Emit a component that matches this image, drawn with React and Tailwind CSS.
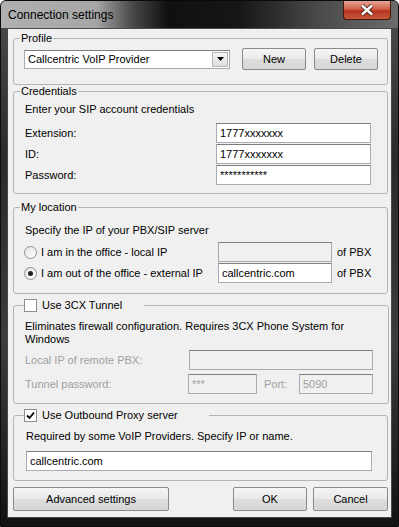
import { useState } from "react";

const font = { fontFamily: '"Liberation Sans", Arial, sans-serif' };

const Input = ({ value, disabled, className = "" }) => (
  <div
    className={`flex h-[20px] items-center border border-[#a9abb0] border-t-[#7e7f82] px-[3px] text-[11px] ${
      disabled ? "bg-[#f0f0f0] text-[#a0a0a0]" : "bg-white text-black"
    } ${className}`}
  >
    {value}
  </div>
);

const Button = ({ children, className = "" }) => (
  <button
    className={`flex items-center justify-center rounded-[2px] border border-[#8a8a8a] bg-[linear-gradient(#f5f5f5,#e9e9e9_50%,#dddddd_51%,#d6d6d6)] text-[11px] text-black ${className}`}
  >
    {children}
  </button>
);

const Checkbox = ({ checked }) => (
  <span className="flex h-[13px] w-[13px] items-center justify-center border border-[#8e8f8f] bg-white">
    {checked && (
      <svg width="9" height="9" viewBox="0 0 9 9">
        <path d="M1 4.5 L3.5 7 L8 1.5" fill="none" stroke="#000" strokeWidth="1.8" />
      </svg>
    )}
  </span>
);

const Radio = ({ checked }) => (
  <span className="flex h-[13px] w-[13px] items-center justify-center rounded-full border border-[#8e8f8f] bg-[linear-gradient(135deg,#e4e4e4,#ffffff)]">
    {checked && <span className="h-[5px] w-[5px] rounded-full bg-[#222]" />}
  </span>
);

export default function App() {
  const [where] = useState("out");

  return (
    <div style={font} className="h-[527px] w-[399px] bg-white">
      <div className="flex h-full w-full flex-col rounded-t-[6px] border border-[#0a0a0a] bg-[linear-gradient(180deg,#4e4e4e,#2a2a2a_30%,#3c3c3c_65%,#121212)]">
        {/* title bar */}
        <div className="flex h-[27px] items-start justify-between rounded-t-[5px] bg-[linear-gradient(90deg,#b0b0b0_0%,#a6a6a6_24%,#4a4a4a_33%,#101010_42%,#161616_60%,#4a4a4a_80%,#6c6c6c_100%)]">
          <span className="ml-[7px] mt-[7px] text-[12px] leading-[14px] text-black">Connection settings</span>
          <div className="mr-[7px] flex h-[19px] w-[48px] items-center justify-center rounded-b-[4px] border border-t-0 border-[#4a1408] bg-[linear-gradient(180deg,#e6a596,#d0604a_45%,#b5321c_55%,#c45a3c)]">
            <svg width="14" height="12" viewBox="0 0 14 12">
              <path d="M2 1.5 L12 10.5 M12 1.5 L2 10.5" stroke="#3a1a14" strokeWidth="4" />
              <path d="M2 1.5 L12 10.5 M12 1.5 L2 10.5" stroke="#ffffff" strokeWidth="2.4" />
            </svg>
          </div>
        </div>

        {/* client area */}
        <div className="mx-[6px] mb-[8px] flex flex-1 flex-col border border-[#4a4a4a] bg-[#f0f0f0] pl-[5px] pr-[3px] text-[11px] leading-[13px] text-black">
          {/* Profile */}
          <fieldset className="mt-[3px] rounded-[3px] border border-[#b4b4b4]">
            <legend className="ml-[6px] px-[1px]">Profile</legend>
            <div className="flex items-center pb-[14px] pl-[10px] pr-[9px] pt-[3px]">
              <div className="flex h-[19px] w-[206px] items-center border border-[#a9abb0] border-t-[#7e7f82] bg-white">
                <span className="flex-1 pl-[3px]">Callcentric VoIP Provider</span>
                <span className="mr-[1px] flex h-[15px] w-[16px] items-center justify-center border border-[#b5b5b5] bg-[linear-gradient(#f4f4f4,#dedede)]">
                  <svg width="7" height="4" viewBox="0 0 7 4">
                    <path d="M0 0 H7 L3.5 4 Z" fill="#000" />
                  </svg>
                </span>
              </div>
              <Button className="ml-[12px] h-[22px] w-[64px]">New</Button>
              <Button className="ml-[8px] h-[22px] w-[64px]">Delete</Button>
            </div>
          </fieldset>

          {/* Credentials */}
          <fieldset className="rounded-[3px] border border-[#b4b4b4]">
            <legend className="ml-[6px] px-[1px]">Credentials</legend>
            <div className="flex flex-col pb-[8px] pl-[11px] pr-[16px] pt-[5px]">
              <span>Enter your SIP account credentials</span>
              <div className="mt-[7px] flex flex-col gap-[1px]">
                {[
                  ["Extension:", "1777xxxxxxx"],
                  ["ID:", "1777xxxxxxx"],
                  ["Password:", "***********"],
                ].map(([label, value]) => (
                  <div key={label} className="flex items-center justify-between">
                    <span>{label}</span>
                    <Input value={value} className="w-[155px]" />
                  </div>
                ))}
              </div>
            </div>
          </fieldset>

          {/* My location */}
          <fieldset className="mt-[7px] rounded-[3px] border border-[#b4b4b4]">
            <legend className="ml-[6px] px-[1px]">My location</legend>
            <div className="flex flex-col pb-[10px] pl-[10px] pr-[10px] pt-[10px]">
              <span className="pl-[1px]">Specify the IP of your PBX/SIP server</span>
              <div className="mt-[5px] flex flex-col gap-[1px]">
                {[
                  ["in", "I am in the office - local IP", "", true],
                  ["out", "I am out of the office - external IP", "callcentric.com", false],
                ].map(([key, label, value, disabled]) => (
                  <div key={key} className="flex items-center">
                    <Radio checked={where === key} />
                    <span className="ml-[4px] w-[177px]">{label}</span>
                    <Input value={value} disabled={disabled} className="w-[114px]" />
                    <span className="ml-[5px]">of PBX</span>
                  </div>
                ))}
              </div>
            </div>
          </fieldset>

          {/* 3CX Tunnel */}
          <fieldset className="mt-[5px] rounded-[3px] border border-[#b4b4b4]">
            <legend className="ml-[10px] flex w-[120px] items-center">
              <Checkbox checked={false} />
              <span className="ml-[5px]">Use 3CX Tunnel</span>
            </legend>
            <div className="flex flex-col pb-[9px] pl-[11px] pr-[15px] pt-[8px]">
              <span>Eliminates firewall configuration. Requires 3CX Phone System for Windows</span>
              <div className="mt-[4px] flex items-center justify-between">
                <span className="text-[#a0a0a0]">Local IP of remote PBX:</span>
                <Input value="" disabled className="w-[184px]" />
              </div>
              <div className="mt-[4px] flex items-center">
                <span className="w-[163px] text-[#a0a0a0]">Tunnel password:</span>
                <Input value="***" disabled className="w-[69px]" />
                <span className="ml-[7px] w-[35px] text-[#a0a0a0]">Port:</span>
                <Input value="5090" disabled className="w-[74px]" />
              </div>
            </div>
          </fieldset>

          {/* Outbound proxy */}
          <fieldset className="mt-[5px] rounded-[3px] border border-[#b4b4b4]">
            <legend className="ml-[10px] flex w-[185px] items-center">
              <Checkbox checked />
              <span className="ml-[5px]">Use Outbound Proxy server</span>
            </legend>
            <div className="flex flex-col pb-[9px] pl-[12px] pr-[15px] pt-[8px]">
              <span>Required by some VoIP Providers. Specify IP or name.</span>
              <Input value="callcentric.com" className="mt-[8px] w-full" />
            </div>
          </fieldset>

          {/* footer buttons */}
          <div className="mt-[6px] flex items-center">
            <Button className="h-[24px] w-[156px]">Advanced settings</Button>
            <Button className="ml-auto h-[24px] w-[74px]">OK</Button>
            <Button className="ml-[6px] h-[24px] w-[75px]">Cancel</Button>
          </div>
        </div>
      </div>
    </div>
  );
}
